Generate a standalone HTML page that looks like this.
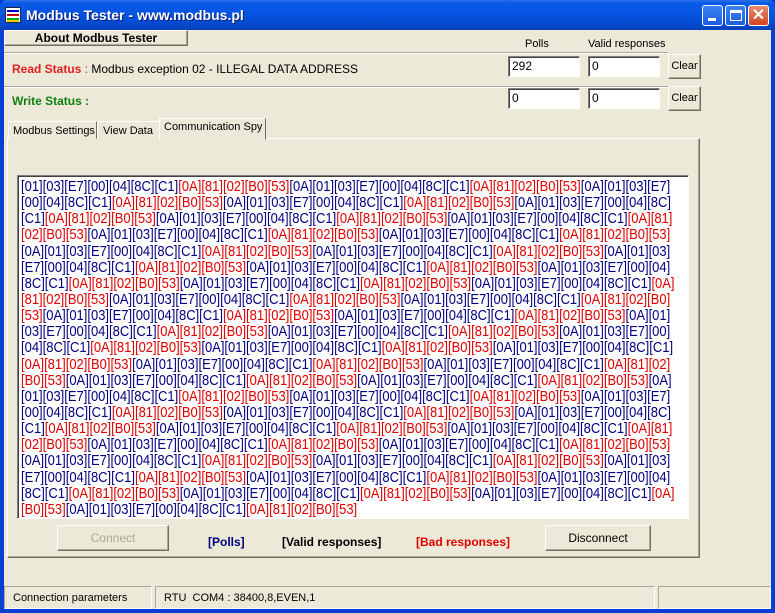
<!DOCTYPE html>
<html><head><meta charset="utf-8">
<style>
*{margin:0;padding:0;box-sizing:border-box}
body{width:775px;height:613px;overflow:hidden;background:#0a3fd6;font-family:"Liberation Sans",sans-serif;font-size:11px;position:relative}
.title{position:absolute;left:0;top:0;width:775px;height:30px;background:linear-gradient(#2b6fe8 0,#0a5ae8 10%,#0553e0 50%,#0447c8 90%,#0a3fb0 100%);border-radius:7px 7px 0 0}
.title .t{position:absolute;left:26px;top:7px;color:#fff;font-weight:bold;font-size:14px;text-shadow:1px 1px #0a1e70}
.ico{position:absolute;left:5px;top:7px;width:16px;height:16px;background:#fff;border:1px solid #224}
.ico i{position:absolute;left:1px;right:1px;height:2px}
.tb{position:absolute;top:5px;width:21px;height:21px;border:1px solid #fff;border-radius:3px;background:linear-gradient(#3c83f5,#1c5ce0)}
.client{position:absolute;left:4px;top:30px;width:767px;height:579px;background:#ece9d8}
.abs{position:absolute;white-space:nowrap}
.btn{position:absolute;background:#ece9d8;border:1px solid;border-color:#fff #716f64 #716f64 #fff;box-shadow:inset -1px -1px #aca899;text-align:center;color:#000;font-size:11px;white-space:nowrap}
.inp{position:absolute;background:#fff;border:1px solid;border-color:#808080 #fff #fff #808080;box-shadow:inset 1px 1px #404040;font-size:12px;padding:2px 3px}
.sep{position:absolute;height:2px;border-top:1px solid #aca899;border-bottom:1px solid #fff}
.box{position:absolute;left:13px;top:145px;width:672px;height:344px;background:#fff;border:1px solid;border-color:#808080 #fff #fff #808080;box-shadow:inset 1px 1px #404040;overflow:hidden;padding:3px 0 0 3px}
.ln{white-space:nowrap;font-size:15px;line-height:16.15px;color:#000080;transform:scaleX(0.865);transform-origin:0 0;height:16.15px}
.ln b{font-weight:normal;color:#e00000}
.sb{position:absolute;top:556px;height:23px;border:1px solid;border-color:#aca899 #fff #fff #aca899;font-size:11px;padding:5px 8px;white-space:nowrap}
.tab{position:absolute;border:1px solid;border-color:#fff #716f64 transparent #fff;font-size:11px;white-space:nowrap;background:#ece9d8}
</style></head><body>
<div class="title">
 <div class="ico"><i style="top:2px;background:#00c"></i><i style="top:6px;background:#c00"></i><i style="top:10px;background:#0a0"></i><i style="top:12px;background:#fc0"></i></div>
 <div class="t">Modbus Tester - www.modbus.pl</div>
 <div class="tb" style="left:702px"><div class="abs" style="left:5px;top:12px;width:8px;height:3px;background:#fff"></div></div>
 <div class="tb" style="left:725px"><div class="abs" style="left:4px;top:4px;width:12px;height:11px;border:1px solid #fff;border-top:3px solid #fff"></div></div>
 <div class="tb" style="left:748px;background:linear-gradient(#e88a6a,#d2451e)"><div class="abs" style="left:0;top:0;width:19px;height:19px;color:#fff;font-weight:bold;font-size:16px;line-height:19px;text-align:center">✕</div></div>
</div>
<div class="client">
 <div class="btn" style="left:0;top:0;width:184px;height:16px;font-weight:bold;font-size:12px;line-height:14px">About Modbus Tester</div>
 <div class="abs" style="left:521px;top:8px;font-size:11px">Polls</div>
 <div class="abs" style="left:584px;top:8px;font-size:11px">Valid responses</div>
 <div class="sep" style="left:0;top:22px;width:664px"></div>
 <div class="abs" style="left:8px;top:32px;font-size:12px"><span style="color:#e02020;font-weight:bold">Read Status</span> <span style="color:#e02020">:</span> Modbus exception 02 - ILLEGAL DATA ADDRESS</div>
 <div class="inp" style="left:504px;top:26px;width:72px;height:21px">292</div>
 <div class="inp" style="left:584px;top:26px;width:72px;height:21px">0</div>
 <div class="btn" style="left:664px;top:24px;width:33px;height:25px;font-size:11px;line-height:23px">Clear</div>
 <div class="sep" style="left:0;top:56px;width:664px"></div>
 <div class="abs" style="left:8px;top:64px;font-size:12px;color:#108010;font-weight:bold">Write Status :</div>
 <div class="inp" style="left:504px;top:58px;width:72px;height:21px">0</div>
 <div class="inp" style="left:584px;top:58px;width:72px;height:21px">0</div>
 <div class="btn" style="left:664px;top:56px;width:33px;height:25px;font-size:11px;line-height:23px">Clear</div>
 <!-- tabs -->
 <div class="abs" style="left:3px;top:108px;width:693px;height:420px;border:1px solid;border-color:#fff #716f64 #716f64 #fff;box-shadow:inset -1px -1px #aca899"></div>
 <div class="tab" style="left:4px;top:91px;width:89px;height:18px;padding:3px 0 0 4px">Modbus Settings</div>
 <div class="tab" style="left:93px;top:91px;width:63px;height:18px;padding:3px 0 0 5px">View Data</div>
 <div class="tab" style="left:155px;top:88px;width:107px;height:22px;padding:2px 0 0 4px">Communication Spy</div>
 <div class="box">
<div class="ln">[01][03][E7][00][04][8C][C1]<b>[0A][81][02][B0][53]</b>[0A][01][03][E7][00][04][8C][C1]<b>[0A][81][02][B0][53]</b>[0A][01][03][E7]</div>
<div class="ln">[00][04][8C][C1]<b>[0A][81][02][B0][53]</b>[0A][01][03][E7][00][04][8C][C1]<b>[0A][81][02][B0][53]</b>[0A][01][03][E7][00][04][8C]</div>
<div class="ln">[C1]<b>[0A][81][02][B0][53]</b>[0A][01][03][E7][00][04][8C][C1]<b>[0A][81][02][B0][53]</b>[0A][01][03][E7][00][04][8C][C1]<b>[0A][81]</b></div>
<div class="ln"><b>[02][B0][53]</b>[0A][01][03][E7][00][04][8C][C1]<b>[0A][81][02][B0][53]</b>[0A][01][03][E7][00][04][8C][C1]<b>[0A][81][02][B0][53]</b></div>
<div class="ln">[0A][01][03][E7][00][04][8C][C1]<b>[0A][81][02][B0][53]</b>[0A][01][03][E7][00][04][8C][C1]<b>[0A][81][02][B0][53]</b>[0A][01][03]</div>
<div class="ln">[E7][00][04][8C][C1]<b>[0A][81][02][B0][53]</b>[0A][01][03][E7][00][04][8C][C1]<b>[0A][81][02][B0][53]</b>[0A][01][03][E7][00][04]</div>
<div class="ln">[8C][C1]<b>[0A][81][02][B0][53]</b>[0A][01][03][E7][00][04][8C][C1]<b>[0A][81][02][B0][53]</b>[0A][01][03][E7][00][04][8C][C1]<b>[0A]</b></div>
<div class="ln"><b>[81][02][B0][53]</b>[0A][01][03][E7][00][04][8C][C1]<b>[0A][81][02][B0][53]</b>[0A][01][03][E7][00][04][8C][C1]<b>[0A][81][02][B0]</b></div>
<div class="ln"><b>[53]</b>[0A][01][03][E7][00][04][8C][C1]<b>[0A][81][02][B0][53]</b>[0A][01][03][E7][00][04][8C][C1]<b>[0A][81][02][B0][53]</b>[0A][01]</div>
<div class="ln">[03][E7][00][04][8C][C1]<b>[0A][81][02][B0][53]</b>[0A][01][03][E7][00][04][8C][C1]<b>[0A][81][02][B0][53]</b>[0A][01][03][E7][00]</div>
<div class="ln">[04][8C][C1]<b>[0A][81][02][B0][53]</b>[0A][01][03][E7][00][04][8C][C1]<b>[0A][81][02][B0][53]</b>[0A][01][03][E7][00][04][8C][C1]</div>
<div class="ln"><b>[0A][81][02][B0][53]</b>[0A][01][03][E7][00][04][8C][C1]<b>[0A][81][02][B0][53]</b>[0A][01][03][E7][00][04][8C][C1]<b>[0A][81][02]</b></div>
<div class="ln"><b>[B0][53]</b>[0A][01][03][E7][00][04][8C][C1]<b>[0A][81][02][B0][53]</b>[0A][01][03][E7][00][04][8C][C1]<b>[0A][81][02][B0][53]</b>[0A]</div>
<div class="ln">[01][03][E7][00][04][8C][C1]<b>[0A][81][02][B0][53]</b>[0A][01][03][E7][00][04][8C][C1]<b>[0A][81][02][B0][53]</b>[0A][01][03][E7]</div>
<div class="ln">[00][04][8C][C1]<b>[0A][81][02][B0][53]</b>[0A][01][03][E7][00][04][8C][C1]<b>[0A][81][02][B0][53]</b>[0A][01][03][E7][00][04][8C]</div>
<div class="ln">[C1]<b>[0A][81][02][B0][53]</b>[0A][01][03][E7][00][04][8C][C1]<b>[0A][81][02][B0][53]</b>[0A][01][03][E7][00][04][8C][C1]<b>[0A][81]</b></div>
<div class="ln"><b>[02][B0][53]</b>[0A][01][03][E7][00][04][8C][C1]<b>[0A][81][02][B0][53]</b>[0A][01][03][E7][00][04][8C][C1]<b>[0A][81][02][B0][53]</b></div>
<div class="ln">[0A][01][03][E7][00][04][8C][C1]<b>[0A][81][02][B0][53]</b>[0A][01][03][E7][00][04][8C][C1]<b>[0A][81][02][B0][53]</b>[0A][01][03]</div>
<div class="ln">[E7][00][04][8C][C1]<b>[0A][81][02][B0][53]</b>[0A][01][03][E7][00][04][8C][C1]<b>[0A][81][02][B0][53]</b>[0A][01][03][E7][00][04]</div>
<div class="ln">[8C][C1]<b>[0A][81][02][B0][53]</b>[0A][01][03][E7][00][04][8C][C1]<b>[0A][81][02][B0][53]</b>[0A][01][03][E7][00][04][8C][C1]<b>[0A]</b></div>
<div class="ln"><b>[B0][53]</b>[0A][01][03][E7][00][04][8C][C1]<b>[0A][81][02][B0][53]</b></div>
 </div>
 <div class="btn" style="left:53px;top:495px;width:112px;height:26px;line-height:24px;color:#aca899;font-size:12px">Connect</div>
 <div class="abs" style="left:204px;top:505px;font-size:12px;font-weight:bold;color:#000080">[Polls]</div>
 <div class="abs" style="left:278px;top:505px;font-size:12px;font-weight:bold;color:#000">[Valid responses]</div>
 <div class="abs" style="left:412px;top:505px;font-size:12px;font-weight:bold;color:#e00000">[Bad responses]</div>
 <div class="btn" style="left:541px;top:495px;width:106px;height:26px;line-height:24px;font-size:12px">Disconnect</div>
 <div class="sb" style="left:0;width:148px">Connection parameters</div>
 <div class="sb" style="left:151px;width:500px">RTU&nbsp; COM4 : 38400,8,EVEN,1</div>
 <div class="sb" style="left:654px;width:113px"></div>
</div>
</body></html>
